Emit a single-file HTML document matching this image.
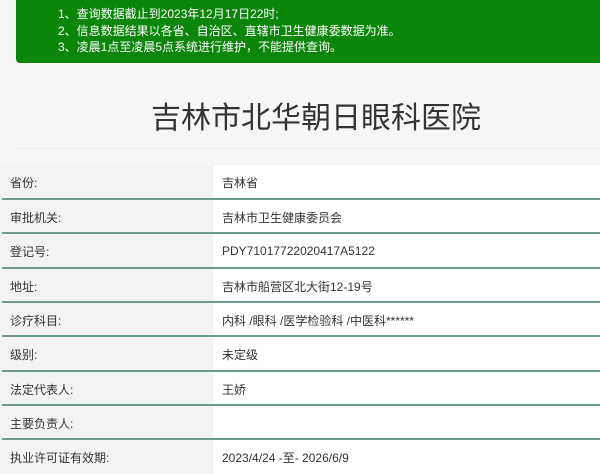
<!DOCTYPE html>
<html><head><meta charset="utf-8"><style>
body{margin:0;width:600px;height:468px;background:#f6f6f6;font-family:"Liberation Sans","Noto Sans CJK SC",sans-serif;overflow:hidden;position:relative}
.g{position:absolute;left:16px;top:-5px;width:600px;height:68px;background:#0b860b;border-radius:4px;color:#fff;font-size:12px;line-height:16.5px;padding:11px 0 0 42px;box-sizing:border-box}
h1{position:absolute;top:99px;left:16px;width:600px;text-align:center;margin:0;font-weight:normal;font-size:30px;color:#333;line-height:40px}
.hl{position:absolute;top:148px;left:16px;width:584px;height:1px;background:#ececec}
.row{position:absolute;left:0;width:600px;height:34.3px;font-size:12px;color:#333}
.row .l{position:absolute;left:0;top:0;width:213px;height:100%;background:#f3f3f3;padding-left:10px;box-sizing:border-box;display:flex;align-items:center}
.row .v{position:absolute;left:213px;top:0;right:0;height:100%;background:#fff;padding-left:9px;display:flex;align-items:center}
.sep{position:absolute;left:2px;width:598px;height:2px;background:#6e9c8a}
</style></head><body>
<div class="g">1、查询数据截止到2023年12月17日22时;<br>2、信息数据结果以各省、自治区、直辖市卫生健康委数据为准。<br>3、凌晨1点至凌晨5点系统进行维护，不能提供查询。</div>
<h1>吉林市北华朝日眼科医院</h1>
<div class="hl"></div>
<div class="row" style="top:165px"><div class="l">省份:</div><div class="v">吉林省</div></div>
<div class="sep" style="top:198px"></div>
<div class="row" style="top:200px"><div class="l">审批机关:</div><div class="v">吉林市卫生健康委员会</div></div>
<div class="sep" style="top:232px"></div>
<div class="row" style="top:234px"><div class="l">登记号:</div><div class="v">PDY71017722020417A5122</div></div>
<div class="sep" style="top:267px"></div>
<div class="row" style="top:269px"><div class="l">地址:</div><div class="v">吉林市船营区北大街12-19号</div></div>
<div class="sep" style="top:301px"></div>
<div class="row" style="top:303px"><div class="l">诊疗科目:</div><div class="v">内科 /眼科 /医学检验科 /中医科******</div></div>
<div class="sep" style="top:335px"></div>
<div class="row" style="top:337px"><div class="l">级别:</div><div class="v">未定级</div></div>
<div class="sep" style="top:370px"></div>
<div class="row" style="top:372px"><div class="l">法定代表人:</div><div class="v">王娇</div></div>
<div class="sep" style="top:404px"></div>
<div class="row" style="top:406px"><div class="l">主要负责人:</div><div class="v"></div></div>
<div class="sep" style="top:438px"></div>
<div class="row" style="top:440px"><div class="l">执业许可证有效期:</div><div class="v">2023/4/24 -至- 2026/6/9</div></div>
</body></html>
